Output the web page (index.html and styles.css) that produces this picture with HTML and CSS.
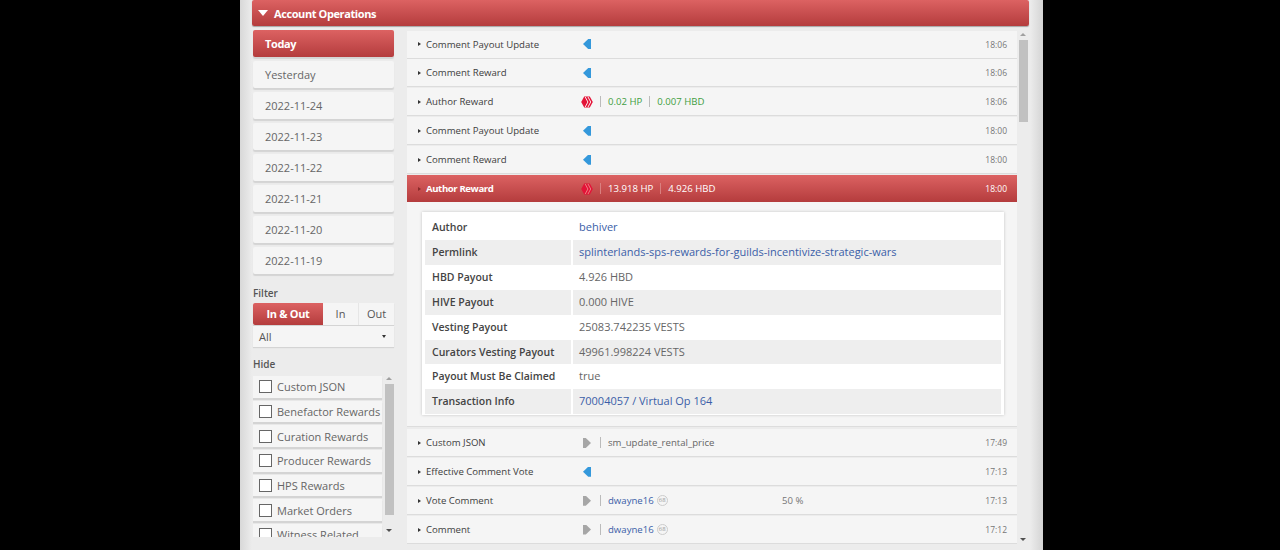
FILE: index.html
```html
<!DOCTYPE html>
<html lang="en">
<head>
    <meta charset="UTF-8">
    <title>Account Operations</title>
    <link rel="stylesheet" href="styles.css">
</head>
<body>
    <svg class="defs" width="0" height="0">
        <symbol id="hive" viewBox="0 0 12 12">
            <path fill="#e31337" d="M3.200 0.400h5.600L11.800 6l-3 5.600H3.200L0.200 6z"/>
            <path fill="none" stroke="currentColor" stroke-width="0.900" d="M4.200 1 6.900 6l-2.700 5M7 1l2.700 5L7 11"/>
        </symbol>
    </svg>
    <div class="page">
        <div class="panel">
            <div class="panel-head"><span class="caret-down"></span>Account Operations</div>
            <div class="panel-body">
                <div class="side">
                    <div class="tab active">Today</div>
                    <div class="tab">Yesterday</div>
                    <div class="tab">2022-11-24</div>
                    <div class="tab">2022-11-23</div>
                    <div class="tab">2022-11-22</div>
                    <div class="tab">2022-11-21</div>
                    <div class="tab">2022-11-20</div>
                    <div class="tab">2022-11-19</div>

                    <div class="side-label filter-label">Filter</div>
                    <div class="seg">
                        <div class="seg-item active">In &amp; Out</div>
                        <div class="seg-item in">In</div>
                        <div class="seg-item out">Out</div>
                    </div>
                    <div class="select">All<span class="select-arrow"></span></div>

                    <div class="side-label hide-label">Hide</div>
                    <div class="hide-box">
                        <div class="hide-list">
                            <div class="check"><span class="box"></span>Custom JSON</div>
                            <div class="check"><span class="box"></span>Benefactor Rewards</div>
                            <div class="check"><span class="box"></span>Curation Rewards</div>
                            <div class="check"><span class="box"></span>Producer Rewards</div>
                            <div class="check"><span class="box"></span>HPS Rewards</div>
                            <div class="check"><span class="box"></span>Market Orders</div>
                            <div class="check"><span class="box"></span>Witness Related</div>
                        </div>
                        <div class="bar small">
                            <span class="arrow-up"></span>
                            <span class="thumb"></span>
                            <span class="arrow-down"></span>
                        </div>
                    </div>
                </div>

                <div class="ops">
                    <div class="op-list">
                        <div class="op"><span class="tri"></span><span class="op-name">Comment Payout Update</span><span class="op-icon"><span class="in-arrow"></span></span><span class="time">18:06</span></div>
                        <div class="op"><span class="tri"></span><span class="op-name">Comment Reward</span><span class="op-icon"><span class="in-arrow"></span></span><span class="time">18:06</span></div>
                        <div class="op"><span class="tri"></span><span class="op-name">Author Reward</span><span class="op-icon"><svg class="hive"><use href="#hive"/></svg></span><span class="sep"></span><span class="green">0.02 HP</span><span class="sep"></span><span class="green">0.007 HBD</span><span class="time">18:06</span></div>
                        <div class="op"><span class="tri"></span><span class="op-name">Comment Payout Update</span><span class="op-icon"><span class="in-arrow"></span></span><span class="time">18:00</span></div>
                        <div class="op"><span class="tri"></span><span class="op-name">Comment Reward</span><span class="op-icon"><span class="in-arrow"></span></span><span class="time">18:00</span></div>
                        <div class="op open"><span class="tri"></span><span class="op-name">Author Reward</span><span class="op-icon"><svg class="hive"><use href="#hive"/></svg></span><span class="sep"></span><span>13.918 HP</span><span class="sep"></span><span>4.926 HBD</span><span class="time">18:00</span></div>
                        <div class="detail">
                            <div class="detail-card">
                                <div class="d-row"><div class="d-key">Author</div><div class="d-val link">behiver</div></div>
                                <div class="d-row"><div class="d-key">Permlink</div><div class="d-val link">splinterlands-sps-rewards-for-guilds-incentivize-strategic-wars</div></div>
                                <div class="d-row"><div class="d-key">HBD Payout</div><div class="d-val">4.926 HBD</div></div>
                                <div class="d-row"><div class="d-key">HIVE Payout</div><div class="d-val">0.000 HIVE</div></div>
                                <div class="d-row"><div class="d-key">Vesting Payout</div><div class="d-val">25083.742235 VESTS</div></div>
                                <div class="d-row"><div class="d-key">Curators Vesting Payout</div><div class="d-val">49961.998224 VESTS</div></div>
                                <div class="d-row"><div class="d-key">Payout Must Be Claimed</div><div class="d-val">true</div></div>
                                <div class="d-row"><div class="d-key">Transaction Info</div><div class="d-val link">70004057 / Virtual Op 164</div></div>
                            </div>
                        </div>
                        <div class="op"><span class="tri"></span><span class="op-name">Custom JSON</span><span class="op-icon"><span class="out-arrow"></span></span><span class="sep"></span><span class="grey">sm_update_rental_price</span><span class="time">17:49</span></div>
                        <div class="op"><span class="tri"></span><span class="op-name">Effective Comment Vote</span><span class="op-icon"><span class="in-arrow"></span></span><span class="time">17:13</span></div>
                        <div class="op"><span class="tri"></span><span class="op-name">Vote Comment</span><span class="op-icon"><span class="out-arrow"></span></span><span class="sep"></span><span class="user">dwayne16</span><span class="rep">68</span><span class="pct">50 %</span><span class="time">17:13</span></div>
                        <div class="op"><span class="tri"></span><span class="op-name">Comment</span><span class="op-icon"><span class="out-arrow"></span></span><span class="sep"></span><span class="user">dwayne16</span><span class="rep">68</span><span class="time">17:12</span></div>
                    </div>
                    <div class="bar big">
                        <span class="arrow-up"></span>
                        <span class="thumb"></span>
                        <span class="arrow-down"></span>
                    </div>
                </div>
            </div>
        </div>
    </div>
</body>
</html>
```

FILE: styles.css
```css
* {
    box-sizing: border-box;
}

html, body {
    height: 550px;
    margin: 0;
    overflow: hidden;
    background: #000;
}

body {
    font-family: "Open Sans", Arial, sans-serif;
    font-size: 11px;
    color: #555;
}

.defs {
    position: absolute;
}

.page {
    width: 803px;
    height: 550px;
    margin-left: 240px;
    padding: 0 14px 0 12px;
    overflow: hidden;
    background: linear-gradient(to right, #d8d8d8 0, #ececec 12px, #ececec 790px, #d4d4d4 803px);
}

.panel-head {
    display: flex;
    align-items: center;
    height: 26px;
    padding-left: 6px;
    font-size: 11px;
    font-weight: 700;
    letter-spacing: -0.4px;
    color: #fff;
    border-radius: 2px;
    background: linear-gradient(#dc6262, #b43c3d);
    box-shadow: 0 1px 1px rgba(0, 0, 0, 0.3);
}

.caret-down {
    width: 0;
    height: 0;
    margin-right: 6px;
    border-left: 5px solid transparent;
    border-right: 5px solid transparent;
    border-top: 6px solid #fff;
}

.panel-body {
    display: flex;
    margin-top: 4px;
}

.side {
    width: 141px;
    margin-left: 1px;
    flex: none;
}

.tab {
    height: 27px;
    margin-bottom: 4px;
    padding-left: 12px;
    line-height: 27px;
    font-size: 11px;
    color: #666;
    border-radius: 2px;
    background: #f5f5f5;
    box-shadow: 0 2px 1px rgba(0, 0, 0, 0.1);
}

.tab.active {
    font-weight: 700;
    letter-spacing: -0.4px;
    color: #fff;
    background: linear-gradient(#dc6262, #b43c3d);
}

.side-label {
    font-size: 10px;
    font-weight: 600;
    color: #555;
}

.filter-label {
    margin-top: 12px;
    line-height: 14px;
}

.seg {
    display: flex;
    height: 22px;
    margin-top: 3px;
    line-height: 22px;
    text-align: center;
    background: #f5f5f5;
    box-shadow: 0 1px 1px rgba(0, 0, 0, 0.1);
}

.seg-item.active {
    width: 70px;
    font-weight: 700;
    letter-spacing: -0.3px;
    color: #fff;
    border-radius: 2px 0 0 2px;
    background: linear-gradient(#dc6262, #b43c3d);
}

.seg-item.in {
    width: 36px;
    border-right: 1px solid #e6e6e6;
}

.seg-item.out {
    flex: 1;
}

.select {
    position: relative;
    height: 21px;
    margin-top: 1px;
    padding-left: 6px;
    line-height: 21px;
    background: #f5f5f5;
    box-shadow: 0 1px 1px rgba(0, 0, 0, 0.1);
}

.select-arrow {
    position: absolute;
    right: 8px;
    top: 9px;
    border-left: 2px solid transparent;
    border-right: 2px solid transparent;
    border-top: 3px solid #333;
}

.hide-label {
    margin-top: 10px;
    line-height: 14px;
}

.hide-box {
    display: flex;
    height: 163px;
    margin-top: 3px;
    overflow: hidden;
    background: #ececec;
}

.hide-list {
    width: 129px;
    flex: none;
    padding-top: 2px;
}

.check {
    display: flex;
    align-items: center;
    height: 21.700px;
    margin-bottom: 3px;
    font-size: 11px;
    color: #666;
    white-space: nowrap;
    background: #f5f5f5;
    box-shadow: 0 2px 1px rgba(0, 0, 0, 0.1);
}

.box {
    width: 13px;
    height: 13px;
    margin: 0 5px 0 6px;
    flex: none;
    border: 1px solid #666;
    background: #fff;
}

.bar {
    display: flex;
    flex-direction: column;
    align-items: center;
    flex: none;
    width: 10px;
}

.bar.small {
    margin-left: 2px;
}

.bar.big {
    height: 516px;
    margin-left: 1px;
}

.thumb {
    display: block;
    width: 9px;
    background: #c1c1c1;
}

.bar.small .thumb {
    height: 131px;
    margin-top: 4px;
}

.bar.big .thumb {
    height: 82px;
    margin-top: 4px;
}

.arrow-up, .arrow-down {
    display: block;
    flex: none;
    border-left: 3px solid transparent;
    border-right: 3px solid transparent;
}

.arrow-up {
    margin-top: 3px;
    border-bottom: 3px solid #a0a0a0;
}

.arrow-down {
    margin-top: auto;
    margin-bottom: 5px;
    border-top: 3px solid #505050;
}

.ops {
    display: flex;
    flex: 1;
    margin-left: 13px;
    height: 520px;
}

.op-list {
    width: 610px;
    flex: none;
    height: 520px;
    padding-top: 0.600px;
    overflow: hidden;
}

.op {
    display: flex;
    align-items: center;
    height: 27px;
    margin-bottom: 1.900px;
    padding: 0 10px 0 11px;
    font-size: 9.600px;
    color: #555;
    white-space: nowrap;
    background: #f5f5f5;
    box-shadow: 0 1px 0 #dcdcdc;
}

.tri {
    width: 0;
    height: 0;
    margin-right: 5px;
    border-top: 2.500px solid transparent;
    border-bottom: 2.500px solid transparent;
    border-left: 3px solid #333;
}

.op-name {
    width: 155px;
    flex: none;
    color: #3d3d3d;
}

.op-icon {
    display: flex;
    justify-content: center;
    width: 12px;
    flex: none;
}

.in-arrow {
    width: 8px;
    height: 10px;
    background: #3498db;
    clip-path: polygon(0 50%, 65% 0, 100% 0, 100% 100%, 65% 100%);
}

.out-arrow {
    width: 8px;
    height: 10px;
    background: #a6a6a6;
    clip-path: polygon(0 0, 35% 0, 100% 50%, 35% 100%, 0 100%);
}

.hive {
    width: 12px;
    height: 12px;
    color: #fff;
}

.sep {
    width: 1px;
    height: 11px;
    margin: 0 7px;
    background: #bbb;
}

.green {
    color: #3f9e3f;
}

.grey {
    color: #666;
}

.user {
    color: #3b5ea8;
}

.rep {
    width: 11px;
    height: 11px;
    margin-left: 3px;
    font-size: 6px;
    line-height: 9px;
    text-align: center;
    color: #999;
    border: 1px solid #ccc;
    border-radius: 50%;
}

.pct {
    position: absolute;
    left: 782px;
    color: #777;
}

.time {
    margin-left: auto;
    font-size: 8.500px;
    color: #777;
}

.op.open {
    margin-bottom: 0;
    font-weight: 400;
    color: #fff;
    background: linear-gradient(#dc6262, #b43c3d);
    box-shadow: 0 1px 1px rgba(0, 0, 0, 0.3);
}

.op.open .tri {
    border-left-color: #8a2a2a;
}

.op.open .op-name {
    font-weight: 700;
    letter-spacing: -0.4px;
    color: #fff;
}

.op.open .time {
    color: #fff;
}

.op.open .sep {
    background: #d98080;
}

.op.open .hive {
    color: #e88;
}

.detail {
    height: 225px;
    margin-bottom: 2.400px;
    padding: 10px 13px 0 15px;
    background: #f5f5f5;
    border-bottom: 1px solid #ddd;
}

.detail-card {
    height: 203px;
    padding: 3px;
    background: #fff;
    box-shadow: 0 0 3px rgba(0, 0, 0, 0.2);
}

.d-row {
    display: flex;
    height: 24.900px;
    line-height: 24.900px;
    font-size: 11px;
}

.d-row:nth-child(even) .d-key,
.d-row:nth-child(even) .d-val {
    background: #eee;
}

.d-key {
    width: 146px;
    margin-right: 2px;
    padding-left: 7px;
    flex: none;
    font-size: 10.500px;
    font-weight: 600;
    color: #444;
}

.d-val {
    flex: 1;
    padding-left: 6px;
    color: #666;
}

.d-val.link {
    color: #3b5ea8;
}
```
